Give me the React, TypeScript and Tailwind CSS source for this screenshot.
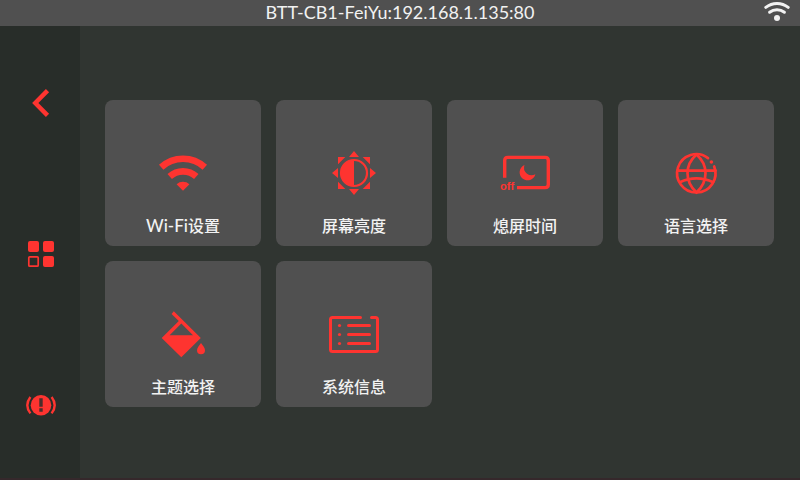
import type { ReactNode } from "react";

const HOST = "BTT-CB1-FeiYu:192.168.1.135:80";

function StatusWifi() {
  return (
    <svg viewBox="0 0 28 24" className="h-6 w-7 justify-self-end text-[#f2f2f2]" aria-hidden="true">
      <g fill="none" stroke="currentColor" strokeWidth="3" strokeLinecap="round">
        <path d="M1.8 6.3 A18 18 0 0 1 24.2 6.3" />
        <path d="M5.6 11.2 A12 12 0 0 1 20.4 11.2" />
      </g>
      <circle cx="13" cy="17" r="3" fill="currentColor" />
    </svg>
  );
}

const navItems = [
  {
    label: "返回",
    icon: (
      <path d="M23.5 3.7 L11.3 16 L23.5 28.3" fill="none" stroke="currentColor" strokeWidth="4.5" />
    ),
  },
  {
    label: "菜单",
    icon: (
      <>
        <rect x="4" y="3" width="11" height="11" rx="2" />
        <rect x="19" y="3" width="11" height="11" rx="2" />
        <rect x="19" y="18" width="11" height="11" rx="2" />
        <rect x="4.8" y="18.8" width="9.4" height="9.4" rx="1" fill="none" stroke="currentColor" strokeWidth="1.7" />
      </>
    ),
  },
  {
    label: "紧急停止",
    icon: (
      <>
        <circle cx="17" cy="16.2" r="10.3" />
        <path
          d="M6.4 8 Q0.2 16.2 6.4 24.4 M27.6 8 Q33.8 16.2 27.6 24.4"
          fill="none"
          stroke="currentColor"
          strokeWidth="2.4"
        />
        <path d="M15.3 9.3 h3.4 v8.4 h-3.4 Z M15.3 19.3 h3.4 v3.4 h-3.4 Z" fill="#4a2e2b" />
      </>
    ),
  },
];

const tiles: { label: ReactNode; name: string; icon: ReactNode }[] = [
  {
    name: "wifi",
    label: (
      <>
        <span className="text-[17px] leading-6">Wi-Fi</span>设置
      </>
    ),
    icon: (
      <>
        <g fill="none" stroke="currentColor" strokeWidth="6.6">
          <path d="M3.2 19.2 A32.3 32.3 0 0 1 46.8 19.2" />
          <path d="M11.7 28.5 A19.7 19.7 0 0 1 38.3 28.5" />
        </g>
        <path d="M25 42.8 L18.6 36.3 A9.5 9.5 0 0 1 31.4 36.3 Z" />
      </>
    ),
  },
  {
    name: "brightness",
    label: "屏幕亮度",
    icon: (
      <>
        <circle cx="25" cy="25" r="13" fill="none" stroke="currentColor" strokeWidth="2.2" />
        <path d="M25 12 A13 13 0 0 0 25 38 Z" />
        <path d="M25 3 L30 9 H20 Z M25 47 L30 41 H20 Z M3 25 L9 20 V30 Z M47 25 L41 20 V30 Z" />
        <path d="M9 9 H16.3 L9 16.3 Z M41 9 V16.3 L33.7 9 Z M9 41 V33.7 L16.3 41 Z M41 41 H33.7 L41 33.7 Z" />
      </>
    ),
  },
  {
    name: "screen-off",
    label: "熄屏时间",
    icon: (
      <>
        <path
          d="M4.7 29.8 V12.5 Q4.7 9.4 7.8 9.4 H45.2 Q48.3 9.4 48.3 12.5 V36.5 Q48.3 39.6 45.2 39.6 H17"
          fill="none"
          stroke="currentColor"
          strokeWidth="3.4"
        />
        <path d="M24.5 17 A8 8 0 1 0 35.4 26.2 A7.6 7.6 0 0 1 24.5 17 Z" />
        <text x="0" y="42" fontSize="11" fontWeight="700" className="font-['Liberation_Sans',sans-serif]">
          off
        </text>
      </>
    ),
  },
  {
    name: "language",
    label: "语言选择",
    icon: (
      <>
        <g fill="none" stroke="currentColor" strokeWidth="2.7" strokeLinecap="round">
          <path d="M37 10.1 A19.2 19.2 0 1 0 43.2 18.4" />
          <path d="M25.5 6.5 C13.5 17 13.5 33.5 25.5 44.5 C37.5 33.5 37.5 17 25.5 6.5" />
          <path d="M6.5 22.6 H44.5" />
          <path d="M8.8 34.3 Q25.5 26.5 42.2 34.3" />
        </g>
        <circle cx="40.4" cy="14" r="1.8" />
      </>
    ),
  },
  {
    name: "theme",
    label: "主题选择",
    icon: (
      <>
        <path
          fillRule="evenodd"
          d="M15.8 2.2 L42.8 29 L23.3 48.2 L3.7 29 L20.8 12 L13.6 4.9 Z M23.3 14.6 L11.6 26.3 H35 Z"
        />
        <path d="M43 34 C45 36.8 47 38.8 47 41.2 A4 4 0 0 1 39 41.2 C39 38.8 41 36.8 43 34 Z" />
      </>
    ),
  },
  {
    name: "system",
    label: "系统信息",
    icon: (
      <>
        <g fill="none" stroke="currentColor" strokeWidth="3" strokeLinecap="round">
          <path d="M31.5 8.5 H3.5 Q1.5 8.5 1.5 10.5 V40.5 Q1.5 42.5 3.5 42.5 H46.5 Q48.5 42.5 48.5 40.5 V10.5 Q48.5 8.5 46.5 8.5 H42.5" />
          <path d="M19.5 16.5 H40.5 M19.5 25.5 H40.5 M19.5 34.5 H40.5" />
        </g>
        <circle cx="10.5" cy="16.5" r="1.6" />
        <circle cx="10.5" cy="25.5" r="1.6" />
        <circle cx="10.5" cy="34.5" r="1.6" />
      </>
    ),
  },
];

export default function App() {
  return (
    <div className="relative flex min-h-screen flex-col bg-[#303531] font-['Lato','Noto_Sans_CJK_SC',sans-serif] text-[#f2f2f2]">
      <header className="grid h-[26px] grid-cols-[1fr_auto_1fr] items-center bg-[#505050] px-2">
        <span />
        <h1 className="pb-0.5 text-lg leading-6">{HOST}</h1>
        <StatusWifi />
      </header>

      <div className="flex flex-1">
        <nav className="flex w-20 flex-col bg-[#282d29] pt-0.5">
          {navItems.map((item) => (
            <button
              key={item.label}
              type="button"
              aria-label={item.label}
              className="flex flex-1 items-center justify-center text-[#fe3430]"
            >
              <svg viewBox="0 0 32 32" className="h-8 w-8 fill-current" aria-hidden="true">
                {item.icon}
              </svg>
            </button>
          ))}
        </nav>

        <main className="flex-1 pt-[74px] pr-[26px] pb-6 pl-[25px]">
          <div className="grid grid-cols-4 gap-[15px]">
            {tiles.map((tile) => (
              <button
                key={tile.name}
                type="button"
                className="flex flex-col items-center gap-4 rounded-lg bg-[#505050] pt-12 pb-2"
              >
                <svg
                  viewBox="0 0 50 50"
                  className="h-[50px] w-[50px] overflow-visible fill-current text-[#fe3430]"
                  aria-hidden="true"
                >
                  {tile.icon}
                </svg>
                <span className="h-6 text-base leading-6 font-medium">{tile.label}</span>
              </button>
            ))}
          </div>
        </main>
      </div>

      {/* thin accent line laid over the bottom edge */}
      <div className="absolute inset-x-0 bottom-0 h-0.5 bg-[#35282b]" />
    </div>
  );
}
